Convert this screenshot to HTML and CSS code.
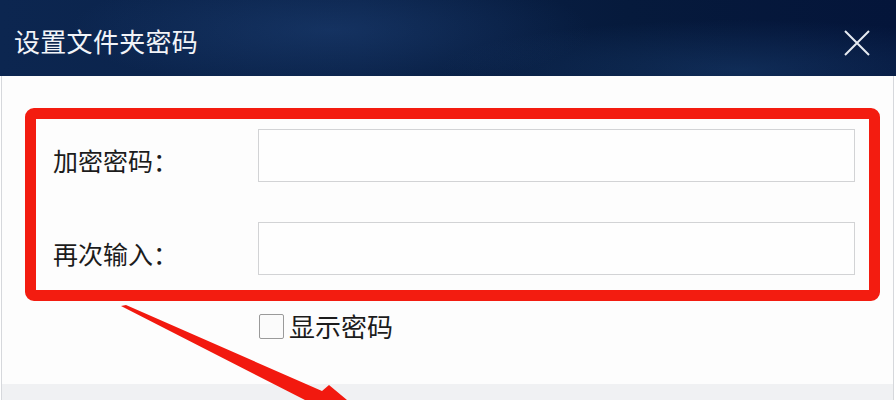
FILE: index.html
```html
<!DOCTYPE html>
<html lang="zh-CN">
<head>
<meta charset="utf-8">
<title>设置文件夹密码</title>
<link rel="stylesheet" href="styles.css">
</head>
<body>
<div class="window">
  <div class="titlebar">
    <div class="title">设置文件夹密码</div>
    <svg class="close" width="26" height="26" viewBox="0 0 26 26">
      <path d="M1 1 L25 25 M25 1 L1 25" stroke="#e6ebf2" stroke-width="2" fill="none"/>
    </svg>
  </div>
  <div class="content">
    <div class="redbox">
      <div class="form">
        <div class="label">加密密码：</div>
        <div class="input"></div>
        <div class="label">再次输入：</div>
        <div class="input"></div>
      </div>
    </div>
    <div class="check-row">
      <span class="checkbox"></span>
      <span class="check-label">显示密码</span>
    </div>
    <div class="footer"></div>
    <svg class="arrow" width="896" height="400" viewBox="0 0 896 400">
      <polygon points="120,306 125,305 321,391 328,385 346,400 304,400" fill="#f2190f"/>
    </svg>
  </div>
</div>
</body>
</html>
```
FILE: styles.css
```css
* { box-sizing: border-box; }
html, body { margin: 0; padding: 0; background: #ffffff; }
body { font-family: "Noto Sans CJK SC", "Noto Sans", sans-serif; }
.window { width: 896px; height: 400px; overflow: hidden; position: relative; }
.titlebar {
  height: 76px;
  display: flex;
  align-items: center;
  justify-content: space-between;
  padding: 0 26px 0 14px;
  background:
    radial-gradient(ellipse 260px 60px at 330px 30px, rgba(40,80,140,0.35), rgba(0,0,0,0)),
    radial-gradient(ellipse 300px 50px at 740px 70px, rgba(40,90,150,0.30), rgba(0,0,0,0)),
    linear-gradient(90deg, #0c2650 0%, #0a2249 40%, #061a3c 70%, #04153a 100%);
}
.title { color: #f2f4f8; font-size: 26px; line-height: 30px; margin-top: 6px; letter-spacing: 0.3px; }
.close { display: block; margin-top: 10px; }
.content {
  height: 324px;
  position: relative;
  background: #fdfdfd;
  border-left: 1px solid #d6d8dc;
  border-right: 1px solid #d6d8dc;
  margin: 0 2px 0 1px;
  display: flex;
  flex-direction: column;
}
.redbox {
  margin: 32px 0 0 23px;
  width: 855px;
  border: 11px solid #f31c10;
  border-radius: 9px;
  background: #fdfdfd;
}
.form {
  display: grid;
  grid-template-columns: 205px 1fr;
  row-gap: 40px;
  padding: 10px 14px 15px 17px;
}
.label { font-size: 25px; color: #1c1c1c; align-self: center; padding-top: 8px; line-height: 30px; }
.input { height: 53px; border: 1px solid #d2d3d5; background: #fefefe; }
.check-row { display: flex; align-items: center; margin: 10px 0 0 257px; gap: 5px; }
.checkbox { width: 25px; height: 25px; border: 1.5px solid #9a9a9a; border-radius: 2px; background: #fbfbfb; }
.check-label { font-size: 26px; color: #1c1c1c; line-height: 30px; }
.footer { margin-top: auto; height: 16px; background: #f0f1f3; }
.arrow { position: absolute; left: -1px; top: -76px; pointer-events: none; }
```
